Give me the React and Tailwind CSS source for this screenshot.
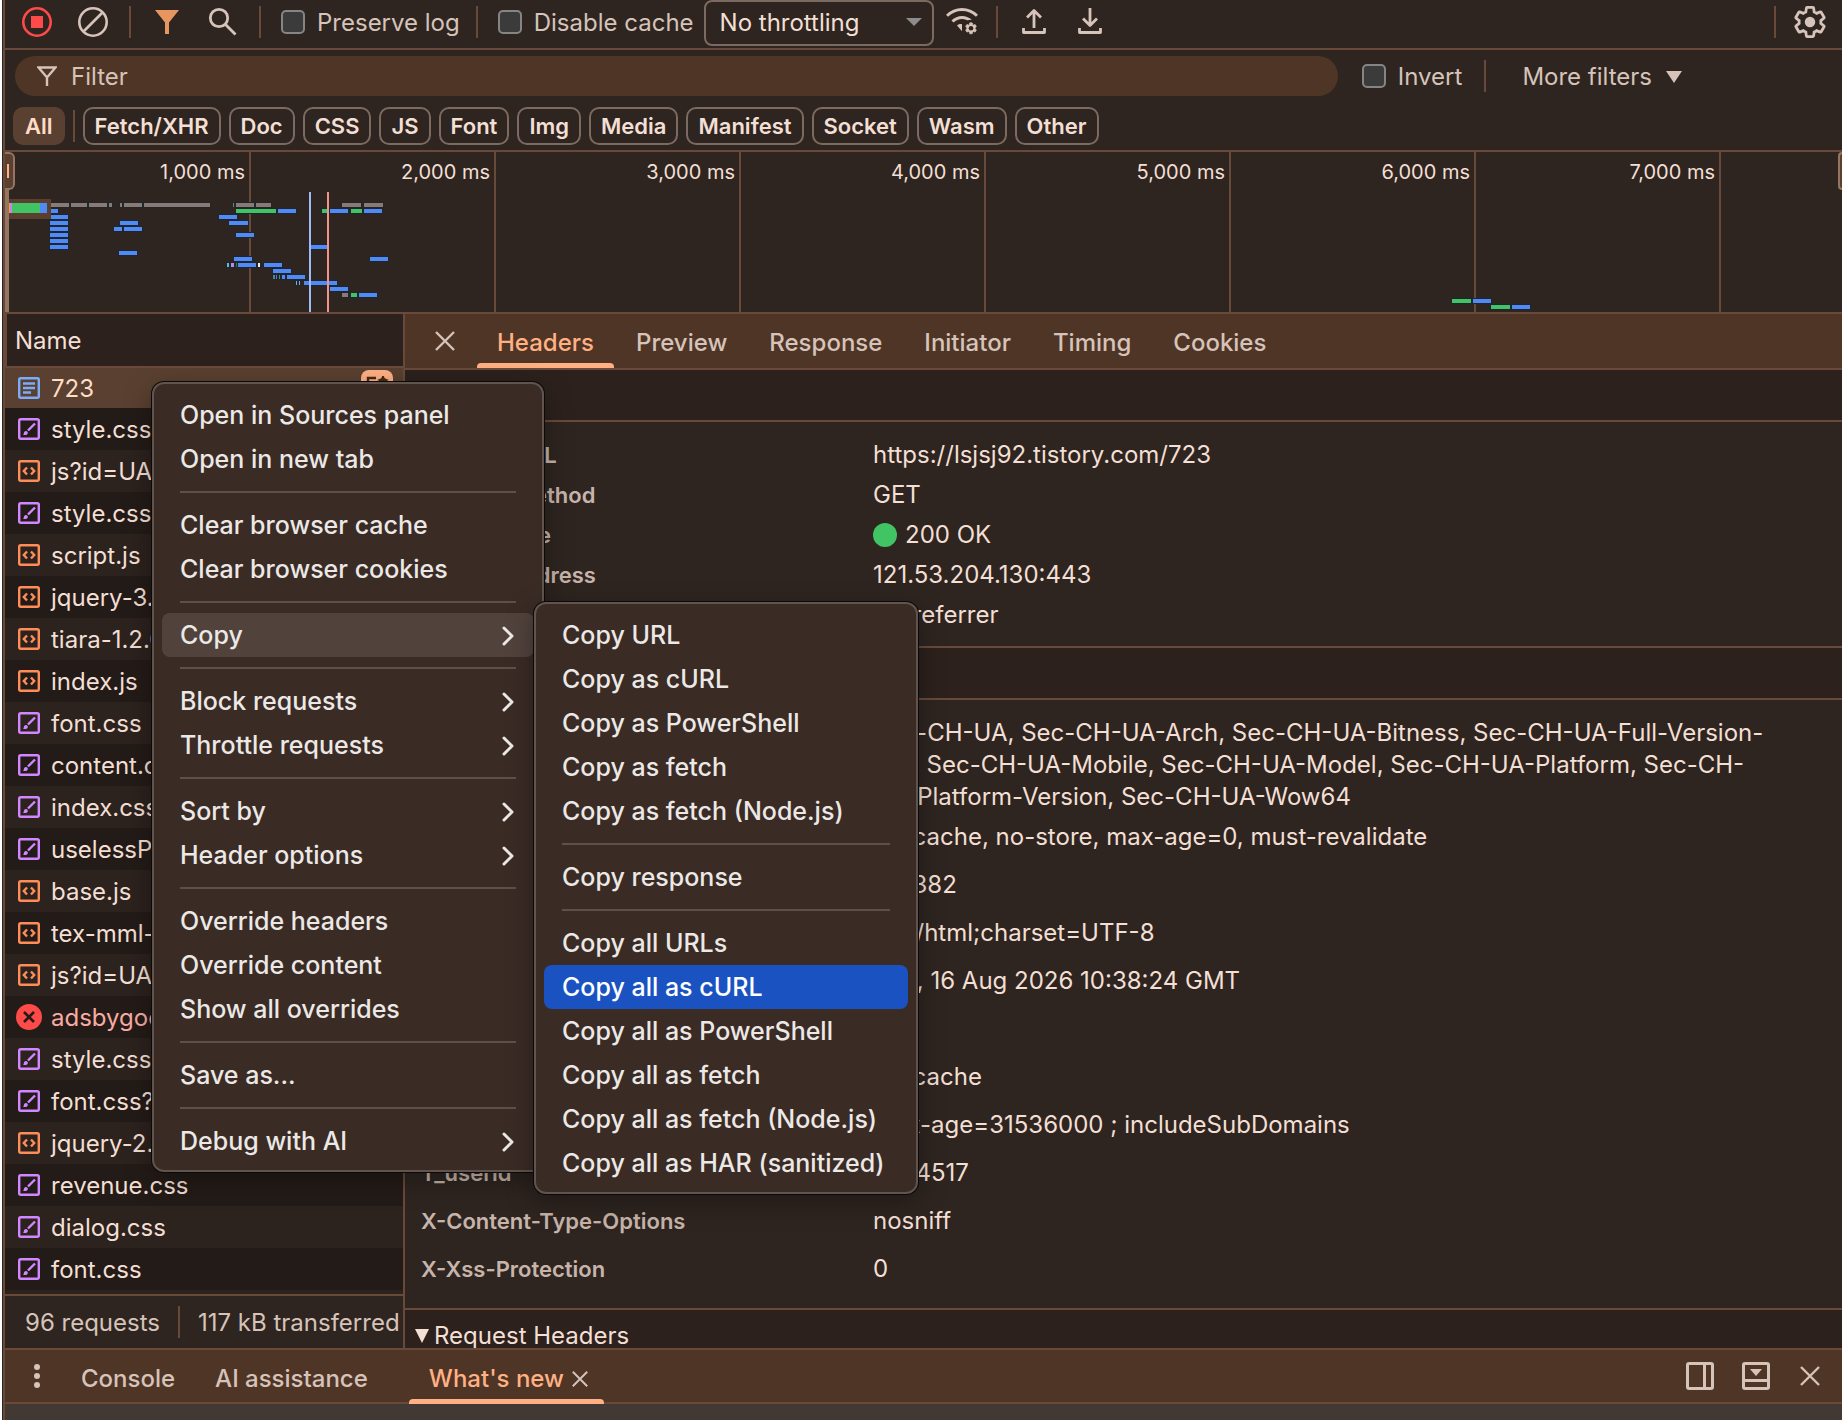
import React, { useState } from "react";

const requests = [
    { name: "723", type: "doc" },
    { name: "style.css", type: "css" },
    { name: "js?id=UA-1122", type: "js" },
    { name: "style.css", type: "css" },
    { name: "script.js", type: "js" },
    { name: "jquery-3.5.1.js", type: "js" },
    { name: "tiara-1.2.0.js", type: "js" },
    { name: "index.js", type: "js" },
    { name: "font.css", type: "css" },
    { name: "content.css", type: "css" },
    { name: "index.css", type: "css" },
    { name: "uselessP.css", type: "css" },
    { name: "base.js", type: "js" },
    { name: "tex-mml-chtml.js", type: "js" },
    { name: "js?id=UA-1122", type: "js" },
    { name: "adsbygoogle.js", type: "error" },
    { name: "style.css", type: "css" },
    { name: "font.css?v=2", type: "css" },
    { name: "jquery-2.2.4.js", type: "js" },
    { name: "revenue.css", type: "css" },
    { name: "dialog.css", type: "css" },
    { name: "font.css", type: "css" },
];

const chips = ["Fetch/XHR", "Doc", "CSS", "JS", "Font", "Img", "Media", "Manifest", "Socket", "Wasm", "Other"];
const ticks = ["1,000 ms", "2,000 ms", "3,000 ms", "4,000 ms", "5,000 ms", "6,000 ms", "7,000 ms"];
const tabs = ["Headers", "Preview", "Response", "Initiator", "Timing", "Cookies"];

const mainMenu = [
    { label: "Open in Sources panel" },
    { label: "Open in new tab" },
    null,
    { label: "Clear browser cache" },
    { label: "Clear browser cookies" },
    null,
    { label: "Copy", sub: true, open: true },
    null,
    { label: "Block requests", sub: true },
    { label: "Throttle requests", sub: true },
    null,
    { label: "Sort by", sub: true },
    { label: "Header options", sub: true },
    null,
    { label: "Override headers" },
    { label: "Override content" },
    { label: "Show all overrides" },
    null,
    { label: "Save as..." },
    null,
    { label: "Debug with AI", sub: true },
];

const copyMenu = [
    { label: "Copy URL" },
    { label: "Copy as cURL" },
    { label: "Copy as PowerShell" },
    { label: "Copy as fetch" },
    { label: "Copy as fetch (Node.js)" },
    null,
    { label: "Copy response" },
    null,
    { label: "Copy all URLs" },
    { label: "Copy all as cURL", active: true },
    { label: "Copy all as PowerShell" },
    { label: "Copy all as fetch" },
    { label: "Copy all as fetch (Node.js)" },
    { label: "Copy all as HAR (sanitized)" },
];

const general = [
    ["Request URL", "https://lsjsj92.tistory.com/723"],
    ["Request Method", "GET"],
    ["Status Code", "200 OK"],
    ["Remote Address", "121.53.204.130:443"],
    ["Referrer Policy", "no-referrer"],
];

const responseHeaders = [
    ["Cache-Control", "no-cache, no-store, max-age=0, must-revalidate"],
    ["Content-Length", "120382"],
    ["Content-Type", "text/html;charset=UTF-8"],
    ["Date", "Sun, 16 Aug 2026 10:38:24 GMT"],
    ["Expires", "0"],
    ["Pragma", "no-cache"],
    ["Strict-Transport-Security", "max-age=31536000 ; includeSubDomains"],
    ["T_userid", "ab24517"],
    ["X-Content-Type-Options", "nosniff"],
    ["X-Xss-Protection", "0"],
];

const BLUE = "#4f8af7";
const GREEN = "#41c464";
const GREY = "#8a7a72";

// [x, y, width, colour] inside the overview strip
const bars = [
    [45, 51, 19, GREY], [66, 51, 16, GREY], [84, 51, 18, GREY], [104, 51, 3, GREY],
    [115, 51, 2, GREY], [119, 51, 18, GREY], [139, 51, 66, GREY], [228, 51, 1, GREY],
    [231, 51, 18, GREY], [251, 51, 15, GREY], [337, 51, 19, GREY], [359, 51, 19, GREY],
    [45, 57, 8, BLUE], [231, 57, 40, GREEN], [273, 57, 18, BLUE], [317, 57, 6, GREEN],
    [325, 57, 18, BLUE], [346, 57, 11, GREEN], [359, 57, 18, BLUE],
    [45, 63, 18, BLUE], [214, 63, 18, BLUE],
    [45, 69, 18, BLUE], [115, 69, 18, BLUE], [224, 69, 19, BLUE],
    [45, 75, 18, BLUE], [109, 75, 8, BLUE], [119, 75, 18, BLUE],
    [45, 81, 18, BLUE], [231, 81, 18, BLUE],
    [45, 87, 18, BLUE],
    [45, 93, 18, BLUE], [306, 93, 16, BLUE],
    [114, 99, 18, BLUE],
    [229, 105, 18, BLUE], [365, 105, 18, BLUE],
    [222, 111, 2, "#4fc3d9"], [226, 111, 3, "#c583ee"], [231, 111, 1, "#2b7a45"],
    [233, 111, 18, BLUE], [253, 111, 2, "#f2e9e4"], [259, 111, 18, BLUE],
    [268, 117, 18, BLUE],
    [268, 123, 2, "#4a8791"], [271, 123, 1, "#8a62a3"], [274, 123, 1, "#36a054"],
    [277, 123, 3, BLUE], [282, 123, 18, BLUE],
    [291, 129, 1, "#4fc3d9"], [294, 129, 1, "#c583ee"], [299, 129, 33, BLUE],
    [325, 135, 18, BLUE],
    [337, 141, 6, GREY], [346, 141, 6, GREEN], [354, 141, 18, BLUE],
    [1447, 147, 19, GREEN], [1468, 147, 18, BLUE],
    [1486, 153, 19, GREEN], [1507, 153, 18, BLUE],
];

const GEAR =
    "M19.43 12.98c.04-.32.07-.64.07-.98 0-.34-.03-.66-.07-.98l2.11-1.65c.19-.15.24-.42.12-.64l-2-3.46c-.09-.16-.26-.25-.44-.25-.06 0-.12.01-.17.03l-2.49 1c-.52-.4-1.08-.73-1.69-.98l-.38-2.65C14.46 2.18 14.25 2 14 2h-4c-.25 0-.46.18-.49.42l-.38 2.65c-.61.25-1.17.59-1.69.98l-2.49-1c-.06-.02-.12-.03-.18-.03-.17 0-.34.09-.43.25l-2 3.46c-.13.22-.07.49.12.64l2.11 1.65c-.04.32-.07.65-.07.98 0 .33.03.66.07.98l-2.11 1.65c-.19.15-.24.42-.12.64l2 3.46c.09.16.26.25.44.25.06 0 .12-.01.17-.03l2.49-1c.52.4 1.08.73 1.69.98l.38 2.65c.03.24.24.42.49.42h4c.25 0 .46-.18.49-.42l.38-2.65c.61-.25 1.17-.59 1.69-.98l2.49 1c.06.02.12.03.18.03.17 0 .34-.09.43-.25l2-3.46c.12-.22.07-.49-.12-.64l-2.11-1.65z";

const CloseIcon = ({ className }) => (
    <svg viewBox="0 0 20 20" className={className} fill="none" stroke="currentColor" strokeWidth="2.4">
        <path d="M1 1l18 18M19 1L1 19" />
    </svg>
);

const TypeIcon = ({ type }) => {
    if (type === "error") {
        return (
            <svg viewBox="0 0 26 26" className="-mr-0.5 -ml-0.5 h-[26px] w-[26px] shrink-0">
                <circle cx="13" cy="13" r="13" fill="#fe4a49" />
                <path d="M8 8l10 10M18 8L8 18" stroke="#241b17" strokeWidth="2.6" />
            </svg>
        );
    }
    if (type === "doc") {
        return (
            <svg viewBox="0 0 22 22" className="h-[22px] w-[22px] shrink-0" fill="none" stroke="#7cacf8" strokeWidth="2.4">
                <rect x="1.2" y="1.2" width="19.6" height="19.6" rx="1.5" />
                <path d="M5 6.5h12M5 11h12M5 15.5h8" />
            </svg>
        );
    }
    if (type === "css") {
        return (
            <svg viewBox="0 0 22 22" className="h-[22px] w-[22px] shrink-0" fill="none" stroke="#d187ff" strokeWidth="2.4">
                <rect x="1.2" y="1.2" width="19.6" height="19.6" rx="1.5" />
                <path d="M17 5.5L10 12.5" />
                <path d="M5 17c1-.6.6-2 1.2-3 .9-1.3 2.8-1.2 3.4 0 .7 1.6-.3 3-2 3z" fill="#d187ff" stroke="none" />
            </svg>
        );
    }
    return (
        <svg viewBox="0 0 22 22" className="h-[22px] w-[22px] shrink-0" fill="none" stroke="#fe8d59" strokeWidth="2.4">
            <rect x="1.2" y="1.2" width="19.6" height="19.6" rx="1.5" />
            <path d="M9 7.5L5.8 11L9 14.5M13 7.5L16.2 11L13 14.5" />
        </svg>
    );
};

const Divider = ({ className = "" }) => <div className={`h-8 w-0.5 shrink-0 bg-[#694a3a] ${className}`} />;

const Check = ({ id, label, className = "" }) => (
    <div className={`flex shrink-0 items-center gap-3 ${className}`}>
        <input
            id={id}
            type="checkbox"
            className="h-6 w-6 appearance-none rounded-[5px] border-2 border-[#858585] bg-[#3b3b3b] checked:bg-[#ffb184]"
        />
        <label htmlFor={id} className="pt-0.5 text-2xl leading-8">
            {label}
        </label>
    </div>
);

const Toolbar = () => (
    <div className="flex h-[50px] shrink-0 items-start border-b-2 border-[#694a3a] pl-4 text-[#d6c3b9]">
        <button aria-label="Stop recording" className="mt-[6px]">
            <svg viewBox="0 0 32 32" className="h-8 w-8">
                <circle cx="16" cy="16" r="13.7" fill="none" stroke="#fe4a49" strokeWidth="2.6" />
                <rect x="10" y="10" width="12" height="12" fill="#fe4a49" />
            </svg>
        </button>
        <button aria-label="Clear" className="mt-[6px] ml-6">
            <svg viewBox="0 0 32 32" className="h-8 w-8" fill="none" stroke="currentColor" strokeWidth="2.6">
                <circle cx="16" cy="16" r="13.7" />
                <path d="M6.5 25.5l19-19" />
            </svg>
        </button>
        <Divider className="mt-[6px] ml-5" />
        <button aria-label="Filter" className="mt-[6px] ml-5">
            <svg viewBox="0 0 32 32" className="h-8 w-8">
                <path d="M4 4h24l-10 12.5v11.5h-4v-11.5z" fill="#e8965f" />
            </svg>
        </button>
        <button aria-label="Search" className="mt-[6px] ml-6">
            <svg viewBox="0 0 32 32" className="h-8 w-8" fill="none" stroke="currentColor" strokeWidth="2.8">
                <circle cx="12" cy="12" r="8.7" />
                <path d="M18 18l10.5 10.5" />
            </svg>
        </button>
        <Divider className="mt-[6px] ml-5" />
        <Check id="preserve" label="Preserve log" className="mt-[5px] ml-5" />
        <Divider className="mt-[6px] ml-4" />
        <Check id="cache" label="Disable cache" className="mt-[5px] ml-5" />
        <div className="relative ml-2.5 shrink-0">
            <select
                aria-label="Throttling"
                className="block h-[46px] w-[230px] appearance-none rounded-lg border-2 border-[#7c6a60] bg-transparent pl-3.5 text-2xl leading-8 text-[#f3dfd4]"
            >
                <option>No throttling</option>
            </select>
            <svg viewBox="0 0 16 8" className="pointer-events-none absolute top-[18px] right-3 h-2 w-4">
                <path d="M0 0h16l-8 8z" fill="#8c8c8c" />
            </svg>
        </div>
        <button aria-label="Network conditions" className="mt-[6px] ml-3">
            <svg viewBox="0 0 32 32" className="h-8 w-8" fill="none" stroke="currentColor" strokeWidth="3">
                <path d="M1 9.8c8.5-8.5 21.5-8.5 30 0" />
                <path d="M6.5 15.5c5.5-5.5 13.5-5.5 19 0" />
                <circle cx="25" cy="22.3" r="8.5" fill="#2e2520" stroke="none" />
                <path d="M11 19.5c1.6-1.3 3.3-1.7 5-1.3v7z" fill="currentColor" stroke="none" />
                <g transform="translate(18.4 15.7) scale(.55)">
                    <path d={GEAR} fill="currentColor" strokeWidth="1.2" />
                    <circle cx="12" cy="12" r="4.2" fill="#2e2520" stroke="none" />
                </g>
            </svg>
        </button>
        <Divider className="mt-[6px] ml-[18px]" />
        <button aria-label="Import HAR" className="mt-[6px] ml-5">
            <svg viewBox="0 0 32 32" className="h-8 w-8" fill="none" stroke="currentColor" strokeWidth="2.8" strokeLinejoin="round">
                <path d="M16 22V5M9 11.5L16 4.5l7 7M5.5 22v4.500h21V22" />
            </svg>
        </button>
        <button aria-label="Export HAR" className="mt-[6px] ml-6">
            <svg viewBox="0 0 32 32" className="h-8 w-8" fill="none" stroke="currentColor" strokeWidth="2.8" strokeLinejoin="round">
                <path d="M16 2v18M9 12.5L16 19.5l7-7M5.5 22v4.500h21V22" />
            </svg>
        </button>
        <Divider className="mt-[6px] ml-auto" />
        <button aria-label="Settings" className="mt-[6px] mr-4 ml-[18px]">
            <svg viewBox="1 1 22 22" className="h-8 w-8">
                <path d={GEAR} fill="none" stroke="currentColor" strokeWidth="1.9" />
                <circle cx="12" cy="12" r="3.6" fill="currentColor" />
            </svg>
        </button>
    </div>
);

const FilterBar = () => (
    <div className="shrink-0 border-b-2 border-[#694a3a] pt-[6px] text-[#d6c3b9]">
        <div className="flex items-center pr-[160px] pl-2.5">
            <div className="flex h-10 flex-1 items-center gap-3.5 rounded-full bg-[#4f3526] pl-[22px]">
                <svg viewBox="0 0 20 20" className="h-5 w-5 shrink-0" fill="none" stroke="currentColor" strokeWidth="2.4">
                    <path d="M1.5 1.5h17L10 11.5z M10 10v10" />
                </svg>
                <input
                    aria-label="Filter"
                    placeholder="Filter"
                    className="w-full bg-transparent pt-0.5 text-2xl leading-8 outline-none placeholder:text-[#d6c3b9]"
                />
            </div>
            <Check id="invert" label="Invert" className="ml-6" />
            <Divider className="ml-[22px]" />
            <button className="ml-9 flex shrink-0 items-center gap-3.5 pt-0.5 text-2xl leading-8">
                More filters
                <svg viewBox="0 0 16 12" className="h-3 w-4">
                    <path d="M0 0h16l-8 12z" fill="currentColor" />
                </svg>
            </button>
        </div>
        <div className="flex items-center gap-2 pt-[11px] pb-[5px] pl-2 text-[22px] leading-[34px] font-semibold text-[#f3dfd4]">
            <button className="rounded-[10px] border-2 border-[#5a4030] bg-[#5a4030] px-2.5 text-[#ffdcc6]">All</button>
            <Divider />
            {chips.map((chip) => (
                <button key={chip} className="rounded-[10px] border-2 border-[#7c6a60] px-2.5">
                    {chip}
                </button>
            ))}
        </div>
    </div>
);

const Overview = () => (
    <div className="relative h-[162px] shrink-0 overflow-hidden border-b-2 border-[#694a3a]">
        <div className="flex h-full pl-px">
            {ticks.map((tick) => (
                <div
                    key={tick}
                    className="w-[245px] shrink-0 border-r-2 border-[#694a3a] pt-1 pr-1 text-right text-xl leading-8 text-[#f3dfd4]"
                >
                    {tick}
                </div>
            ))}
        </div>
        <svg width="1837" height="160" className="absolute top-0 left-0" shapeRendering="crispEdges">
            {bars.map(([x, y, w], i) => (
                <rect key={i} x={x - 1} y={y - 1} width={w + 2} height="6" fill="#20262e" />
            ))}
            {bars.map(([x, y, w, fill], i) => (
                <rect key={i} x={x} y={y} width={w} height="4" fill={fill} />
            ))}
            <rect x="304" y="40" width="2" height="120" fill="#9dbcf5" />
            <rect x="322" y="40" width="2" height="120" fill="#f0958a" />
            <rect x="0" y="37" width="4" height="123" fill="#957561" />
            <rect x="4" y="47" width="42" height="20" fill="#5a3f2e" />
            <rect x="4" y="51" width="1" height="10" fill="#e8a33d" />
            <rect x="5" y="51" width="2" height="10" fill="#c583ee" />
            <rect x="7" y="51" width="28" height="10" fill={GREEN} />
            <rect x="35" y="51" width="7" height="10" fill={BLUE} />
        </svg>
        <div className="absolute top-0 left-0 flex h-[38px] w-2.5 items-center rounded-r-md border-2 border-l-0 border-[#957561] bg-[#5a4030]">
            <div className="ml-0.5 h-3.5 w-0.5 bg-[#ffb184]" />
        </div>
        <div className="absolute top-0 right-0 h-[38px] w-1 rounded-l-md border-2 border-r-0 border-[#957561] bg-[#5a4030]" />
    </div>
);

const RequestList = () => (
    <div className="flex w-[400px] shrink-0 flex-col border-r-2 border-[#694a3a]">
        <div className="min-h-0 flex-1 overflow-hidden bg-[#2c221e]">
            <table className="w-full table-fixed">
                <thead>
                    <tr>
                        <th className="p-0 text-left font-normal">
                            <div className="flex h-[54px] items-center border-b-2 border-l-2 border-[#694a3a] bg-[#2c211d] pt-0.5 pl-2 text-2xl text-[#f3dfd4]">
                                Name
                            </div>
                        </th>
                    </tr>
                </thead>
                <tbody>
                    {requests.map((req, i) => (
                        <tr
                            key={i}
                            className={
                                i === 0
                                    ? "h-10 bg-[#5a4030] text-[#ffdcc6]"
                                    : req.type === "error"
                                      ? "h-[42px] bg-[#231b17] text-[#f9aba3]"
                                      : "h-[42px] text-[#f3dfd4] odd:bg-[#2c221e] even:bg-[#231b17]"
                            }
                        >
                            <td className="p-0">
                                <div className="flex items-center gap-[11px] pl-[13px] text-2xl leading-8">
                                    <TypeIcon type={req.type} />
                                    <span className="pt-0.5 whitespace-nowrap">{req.name}</span>
                                    {i === 0 && (
                                        <span className="mr-2.5 ml-auto flex h-9 w-8 items-center justify-center rounded-lg bg-[#ffb184]">
                                            <svg viewBox="0 0 24 24" className="h-6 w-6" fill="none" stroke="#4a2a14" strokeWidth="2.4">
                                                <path d="M11 2H3v18l4-4h13v-4" />
                                                <path d="M18-2l1.7 4.3L24 4l-4.3 1.700L18 10l-1.7-4.3L12 4l4.3-1.700z" fill="#4a2a14" stroke="none" />
                                            </svg>
                                        </span>
                                    )}
                                </div>
                            </td>
                        </tr>
                    ))}
                </tbody>
            </table>
        </div>
        <div className="flex h-[54px] shrink-0 items-center overflow-hidden border-t-2 border-[#694a3a] pl-5 text-2xl whitespace-nowrap text-[#d6c3b9]">
            <span className="pt-0.5">96 requests</span>
            <Divider className="mx-[18px]" />
            <span className="pt-0.5">117 kB transferred</span>
        </div>
    </div>
);

const SectionTitle = ({ children }) => (
    <button className="flex h-[50px] w-full items-center gap-[5px] bg-[#2c211d] pt-0.5 pl-2.5 text-2xl text-[#f3dfd4]">
        <svg viewBox="0 0 14 14" className="h-3.5 w-3.5">
            <path d="M0 0h14l-7 14z" fill="currentColor" />
        </svg>
        {children}
    </button>
);

const Details = () => {
    const [tab, setTab] = useState("Headers");

    return (
        <div className="flex min-w-0 flex-1 flex-col">
            <div className="flex h-14 shrink-0 items-stretch border-b-2 border-[#694a3a] bg-[#4f3526] text-2xl font-medium text-[#d6c3b9]">
                <button aria-label="Close" className="mr-[21px] ml-[30px]">
                    <CloseIcon className="h-5 w-5" />
                </button>
                {tabs.map((name) => (
                    <button
                        key={name}
                        onClick={() => setTab(name)}
                        className={tab === name ? "flex flex-col px-[21px] text-[#ffb184]" : "flex flex-col px-[21px]"}
                    >
                        <span className="pt-[13px] leading-8">{name}</span>
                        {tab === name && <span className="-mx-5 mt-auto h-[5px] self-stretch rounded-t bg-[#ffb184]" />}
                    </button>
                ))}
            </div>
            <div className="min-h-0 flex-1 overflow-hidden leading-8">
                <SectionTitle>General</SectionTitle>
                <dl className="border-y-2 border-[#694a3a] py-3">
                    {general.map(([name, value]) => (
                        <div key={name} className="flex h-10 items-center pt-0.5 pl-4">
                            <dt className="w-[452px] shrink-0 text-[22px] font-semibold text-[#c7b4aa]">{name}</dt>
                            <dd className="flex items-center gap-2 text-2xl text-[#f3dfd4]">
                                {name === "Status Code" && <span className="h-6 w-6 rounded-full bg-[#41c464]" />}
                                {value}
                            </dd>
                        </div>
                    ))}
                </dl>
                <SectionTitle>Response Headers</SectionTitle>
                <dl className="border-y-2 border-[#694a3a] pt-[17px] pb-[15px]">
                    <div className="flex pl-4">
                        <dt className="w-[452px] shrink-0 text-[22px] font-semibold text-[#c7b4aa]">Accept-Ch</dt>
                        <dd className="text-2xl leading-8 whitespace-nowrap text-[#f3dfd4]">
                            Sec-CH-UA, Sec-CH-UA-Arch, Sec-CH-UA-Bitness, Sec-CH-UA-Full-Version-
                            <br />
                            List, Sec-CH-UA-Mobile, Sec-CH-UA-Model, Sec-CH-UA-Platform, Sec-CH-
                            <br />
                            UA-Platform-Version, Sec-CH-UA-Wow64
                        </dd>
                    </div>
                    {responseHeaders.map(([name, value]) => (
                        <div key={name} className="flex h-12 items-center pl-4">
                            <dt className="w-[452px] shrink-0 text-[22px] font-semibold text-[#c7b4aa]">{name}</dt>
                            <dd className="text-2xl text-[#f3dfd4]">{value}</dd>
                        </div>
                    ))}
                </dl>
                <SectionTitle>Request Headers</SectionTitle>
            </div>
        </div>
    );
};

const Drawer = () => (
    <div className="flex h-14 shrink-0 items-stretch border-y-2 border-[#694a3a] bg-[#4f3526] text-2xl font-medium text-[#d6c3b9]">
        <button aria-label="More" className="ml-[29px]">
            <svg viewBox="0 0 6 24" className="h-6 w-1.5" fill="currentColor">
                <circle cx="3" cy="3" r="3" />
                <circle cx="3" cy="12" r="3" />
                <circle cx="3" cy="21" r="3" />
            </svg>
        </button>
        <button className="ml-[41px] pt-1.5">Console</button>
        <button className="ml-10 pt-1.5">AI assistance</button>
        <div className="-mb-0.5 ml-[41px] flex flex-col text-[#ffb184]">
            <div className="flex flex-1 items-center gap-2 pt-2 pr-4 pl-5">
                <button>What's new</button>
                <button aria-label="Close tab" className="text-[#d6c3b9]">
                    <CloseIcon className="h-4 w-4" />
                </button>
            </div>
            <span className="h-[5px] rounded-t bg-[#ffb184]" />
        </div>
        <div className="mr-[22px] ml-auto flex items-center gap-7">
            <button aria-label="Dock side">
                <svg viewBox="0 0 28 28" className="h-7 w-7" fill="none" stroke="currentColor" strokeWidth="3">
                    <rect x="1.5" y="1.5" width="25" height="25" rx="1.5" />
                    <path d="M18.5 1.5v25" />
                </svg>
            </button>
            <button aria-label="Collapse">
                <svg viewBox="0 0 28 28" className="h-7 w-7" fill="none" stroke="currentColor" strokeWidth="3">
                    <rect x="1.5" y="1.5" width="25" height="25" rx="1.5" />
                    <path d="M1.5 18.5h25" />
                    <path d="M8 7h12l-6 7z" fill="currentColor" stroke="none" />
                </svg>
            </button>
            <button aria-label="Close drawer" className="ml-0.5">
                <CloseIcon className="h-5 w-5" />
            </button>
        </div>
    </div>
);

const Menu = ({ items, className }) => (
    <div
        role="menu"
        className={`absolute rounded-xl border-2 border-[#5f544e] bg-[#3a2b25] px-2 pt-[9px] pb-[7px] shadow-[0_0_0_1px_#0c0908,0_8px_28px_rgba(0,0,0,0.35)] ${className}`}
    >
        {items.map((item, i) =>
            item ? (
                <button
                    key={i}
                    role="menuitem"
                    className={
                        item.active
                            ? "flex h-11 w-full items-center rounded-lg bg-[#1a53c1] px-[18px] pt-0.5 text-left text-[25px] font-medium text-white"
                            : item.open
                              ? "flex h-11 w-full items-center rounded-lg bg-[#51433c] px-[18px] pt-0.5 text-left text-[25px] font-medium text-[#ebe8e6]"
                              : "flex h-11 w-full items-center rounded-lg px-[18px] pt-0.5 text-left text-[25px] font-medium text-[#ebe8e6]"
                    }
                >
                    {item.label}
                    {item.sub && (
                        <svg viewBox="0 0 12 20" className="mr-0.5 ml-auto h-5 w-3" fill="none" stroke="currentColor" strokeWidth="3" strokeLinecap="round" strokeLinejoin="round">
                            <path d="M2 2l8 8-8 8" />
                        </svg>
                    )}
                </button>
            ) : (
                <div key={i} role="separator" className="mx-[18px] flex h-[22px] items-center">
                    <div className="h-0.5 w-full bg-[#5f514a]" />
                </div>
            )
        )}
    </div>
);

const App = () => {
    return (
        <div className="relative flex h-screen overflow-hidden bg-[#2e2520] font-['Inter','Liberation_Sans',sans-serif]">
            <div className="w-0.5 shrink-0 bg-white" />
            <div className="w-px shrink-0 bg-[#2e2520]" />
            <div className="w-0.5 shrink-0 bg-[#694a3a]" />
            <div className="flex min-w-0 flex-1 flex-col">
                <Toolbar />
                <FilterBar />
                <Overview />
                <div className="flex min-h-0 flex-1">
                    <RequestList />
                    <Details />
                </div>
                <Drawer />
                <div className="h-4 shrink-0 bg-[#433934]" />
            </div>
            <Menu items={mainMenu} className="top-[382px] left-[152px] w-[392px]" />
            <Menu items={copyMenu} className="top-[602px] left-[534px] w-[384px]" />
        </div>
    );
};

export default App;
